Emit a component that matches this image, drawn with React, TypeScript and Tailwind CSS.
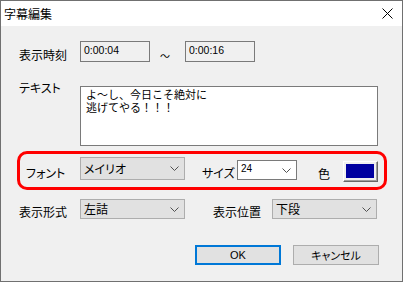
import React from "react";

const FONT = "font-['Noto_Sans_CJK_JP','Noto_Sans',sans-serif] [font-feature-settings:'palt']";

function Chevron() {
  return (
    <svg width="9" height="5" viewBox="0 0 9 5" className="shrink-0">
      <polyline points="0.5,0.5 4.5,4.5 8.5,0.5" fill="none" stroke="#505050" strokeWidth="1" />
    </svg>
  );
}

function Select({ value, w, h }: { value: string; w: string; h: string }) {
  return (
    <div className={`${w} ${h} bg-[#e1e1e1] border border-[#adadad] flex items-center justify-between pl-[3px] pr-[5px] text-[12px] leading-[14px] text-black`}>
      <span>{value}</span>
      <Chevron />
    </div>
  );
}

export default function App() {
  return (
    <div className={`w-[403px] h-[282px] bg-[#f0f0f0] border border-[#707070] flex flex-col text-black ${FONT}`}>
      {/* Title bar */}
      <div className="h-[25px] bg-white flex items-center justify-between shrink-0">
        <span className="pl-[3px] text-[12px] leading-[14px]">字幕編集</span>
        <svg width="11" height="11" viewBox="0 0 11 11" className="mr-[9px]">
          <path d="M0.5 0.5 L10.5 10.5 M10.5 0.5 L0.5 10.5" stroke="#000" strokeWidth="1" />
        </svg>
      </div>

      {/* Row 1: time */}
      <div className="mt-[15px] ml-[18px] flex items-start h-[21px]">
        <div className="w-[61px] pt-[7px] text-[12px] leading-[14px]">表示時刻</div>
        <div className="w-[70px] h-[21px] border border-[#7a7a7a] bg-[#f0f0f0] pl-[3px] pt-[2px] font-['Liberation_Sans',sans-serif] text-[10.5px] leading-[12px]">0:00:04</div>
        <div className="ml-[10px] w-[15px] pt-[8px] text-[10px] leading-[14px] [font-feature-settings:normal]">～</div>
        <div className="ml-[10px] w-[70px] h-[21px] border border-[#7a7a7a] bg-[#f0f0f0] pl-[3px] pt-[2px] font-['Liberation_Sans',sans-serif] text-[10.5px] leading-[12px]">0:00:16</div>
      </div>

      {/* Row 2: text */}
      <div className="mt-[19px] ml-[18px] flex items-start">
        <div className="w-[61px] text-[12px] leading-[14px]">テキスト</div>
        <div className="mt-[5px] w-[298px] h-[60px] bg-white border border-[#7a7a7a] pl-[5px] pt-[1px] text-[11px] leading-[13px] [font-feature-settings:normal]">
          <div>よ～し、今日こそ絶対に</div>
          <div>逃げてやる！！！</div>
        </div>
      </div>

      {/* Highlighted font row */}
      <div className="mt-[5px] ml-[16px] w-[370px] h-[39px] border-[3px] border-[#ff0000] rounded-[10px] flex items-start">
        <div className="ml-[6px] w-[54px] mt-[12px] text-[12px] leading-[14px]">フォント</div>
        <div className="mt-[3px]">
          <Select value="メイリオ" w="w-[105px]" h="h-[23px]" />
        </div>
        <div className="ml-[17px] w-[35px] mt-[12px] text-[12px] leading-[14px] whitespace-nowrap">サイズ</div>
        <div className="mt-[6px] w-[60px] h-[20px] bg-white border border-[#7a7a7a] flex items-start justify-between pl-[3px] pr-[5px]">
          <span className="pt-[2px] font-['Liberation_Sans',sans-serif] text-[10px] leading-[12px]">24</span>
          <div className="mt-[7px]"><Chevron /></div>
        </div>
        <div className="ml-[21px] w-[12px] mt-[13px] text-[12px] leading-[14px]">色</div>
        <div className="ml-[13px] mt-[7px] w-[35px] h-[21px] border-t border-l border-t-white border-l-white border-r border-b border-r-[#696969] border-b-[#696969] bg-[#f0f0f0]">
          <div className="w-full h-full border-r border-b border-r-[#a0a0a0] border-b-[#a0a0a0] pl-[2px] pt-[2px] pr-[2px] pb-[2px]">
            <div className="w-full h-full bg-[#0000a0]" />
          </div>
        </div>
      </div>

      {/* Row: display format / position */}
      <div className="mt-[9px] ml-[18px] flex items-start">
        <div className="w-[61px] mt-[6px] text-[12px] leading-[14px]">表示形式</div>
        <Select value="左詰" w="w-[105px]" h="h-[20px]" />
        <div className="ml-[28px] w-[59px] mt-[6px] text-[12px] leading-[14px]">表示位置</div>
        <Select value="下段" w="w-[105px]" h="h-[20px]" />
      </div>

      {/* Buttons */}
      <div className="mt-[26px] ml-[194px] flex items-start">
        <div className="w-[86px] h-[20px] border-2 border-[#0078d7] bg-[#e1e1e1] flex items-center justify-center font-['Liberation_Sans',sans-serif] text-[11px] leading-[12px]">OK</div>
        <div className="ml-[12px] w-[86px] h-[20px] border border-[#adadad] bg-[#e1e1e1] flex items-center justify-center text-[11px] leading-[12px]">キャンセル</div>
      </div>
    </div>
  );
}
